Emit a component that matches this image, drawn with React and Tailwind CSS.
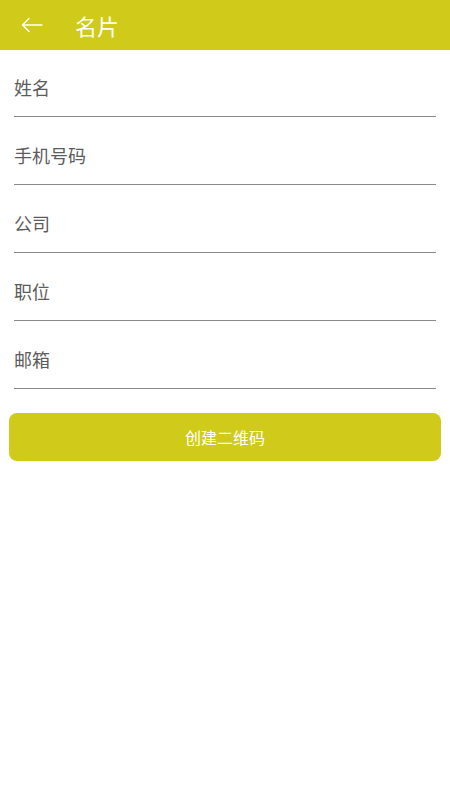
export default function App() {
  const fields = ['姓名', '手机号码', '公司', '职位', '邮箱'];
  return (
    <div className="w-[450px] h-[800px] bg-white" style={{ fontFamily: '"Noto Sans CJK SC", "Noto Sans", sans-serif' }}>
      {/* Header */}
      <div className="h-[50px] bg-[#d0cb1a] flex items-center">
        <svg className="ml-[21px]" width="22" height="16" viewBox="0 0 22 16" fill="none" stroke="#ffffff" strokeWidth="1.4" strokeLinecap="round" strokeLinejoin="round">
          <path d="M21 8H1.5" />
          <path d="M8 1.5L1.5 8L8 14.5" />
        </svg>
        <span className="ml-[32px] text-[22px] text-white leading-none">名片</span>
      </div>

      {/* Form */}
      <div className="px-[14px]">
        {fields.map(f => (
          <div key={f} className="h-[68px] border-b border-[#8a8a8a] flex items-center pt-[10px] first:h-[67px] first:pt-[9px]">
            <input
              className="w-full outline-none text-[18px] text-[#555] placeholder:text-[#5c5c5c] bg-transparent"
              placeholder={f}
            />
          </div>
        ))}
      </div>

      <div className="px-[9px] mt-[24px]">
        <button className="w-full h-[48px] rounded-[8px] bg-[#d0cb1a] text-white text-[16px]">
          创建二维码
        </button>
      </div>
    </div>
  );
}
